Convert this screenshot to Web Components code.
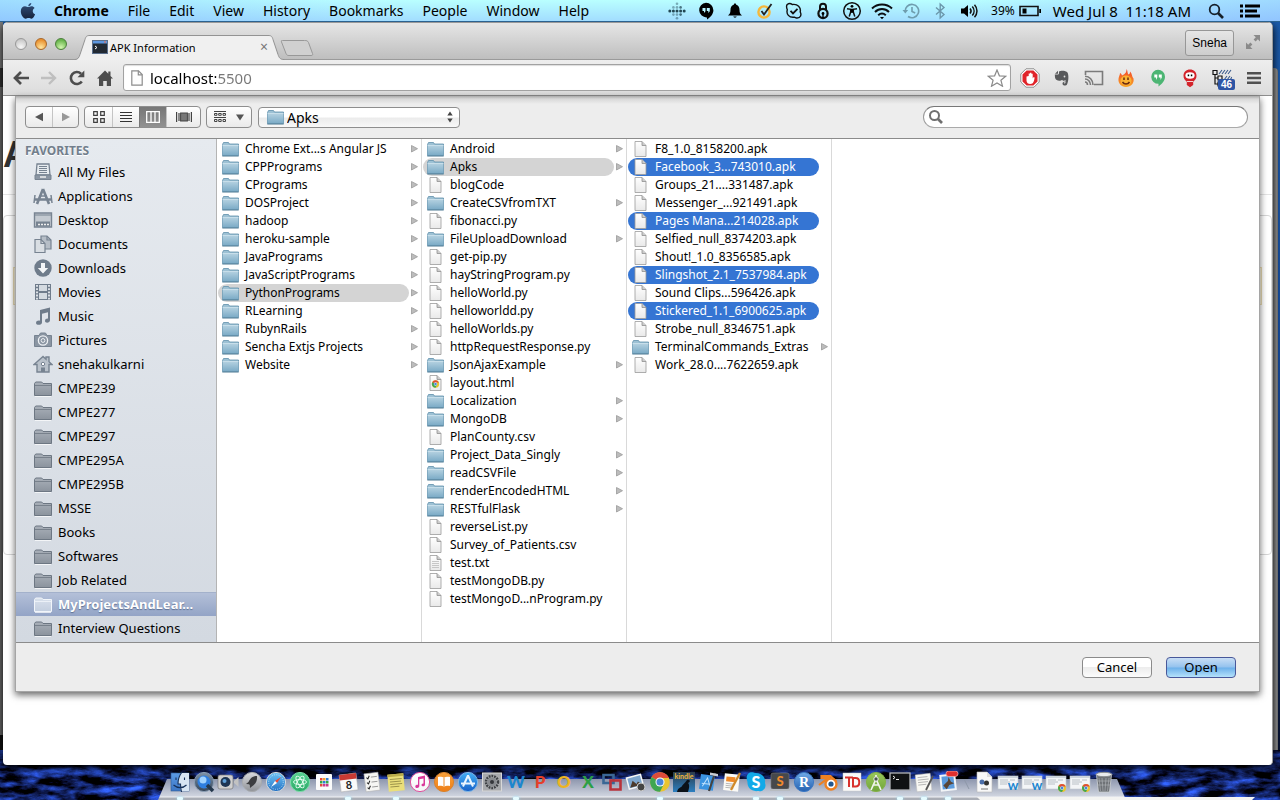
<!DOCTYPE html>
<html lang="en">
<head>
<meta charset="utf-8">
<title>APK Information</title>
<style>
  html, body { margin: 0; height: 100%; }
  body { font-family: "Noto Sans", "Open Sans", sans-serif; font-size: 13px; color: #000; background: #06102e; overflow: hidden; }
</style>
</head>
<body>
<mac-desktop>
  <menu-bar slot="menu"></menu-bar>
  <browser-window slot="window">
    <web-page slot="page"></web-page>
    <open-sheet slot="sheet"></open-sheet>
  </browser-window>
  <app-dock slot="dock"></app-dock>
</mac-desktop>

<script>
const define = (name, html, after) => {
  const t = document.createElement('template');
  t.innerHTML = html;
  customElements.define(name, class extends HTMLElement {
    constructor() {
      super();
      this.attachShadow({ mode: 'open' }).append(t.content.cloneNode(true));
    }
    connectedCallback() { if (after) after(this.shadowRoot, this); }
  });
};

/* ---------- icon library: [width, height, markup] ---------- */
const grad = (id, a, b) => `<linearGradient id="${id}" x1="0" y1="0" x2="0" y2="1"><stop offset="0" stop-color="${a}"/><stop offset="1" stop-color="${b}"/></linearGradient>`;
const page = extra => [17, 16, `${grad('p', '#fff', '#e9e9e9')}<path d="M3 .5h7l4 4v11H3z" fill="url(#p)" stroke="#9b9b9b" stroke-width=".8"/><path d="M10 .5v4h4" fill="#ccc" stroke="#909090" stroke-width=".8"/>${extra || ''}`];
const ball = (a, b, rim, inner) => [22, 22, `${grad('b', a, b)}<circle cx="11" cy="11" r="9.6" fill="url(#b)" stroke="${rim}"/>${inner}`];
const chromeBall = (x, y, r) => `<g transform="translate(${x} ${y}) scale(${r / 10})"><circle r="10" fill="#e9c42f"/><path d="M0 0L-8.7-5A10 10 0 0 1 8.7-5L9-4H0z" fill="#dd4b3a"/><path d="M0 0L-8.7-5A10 10 0 0 0 0 10L4 2z" fill="#3fa652"/><circle r="4.6" fill="#fff"/><circle r="3.6" fill="#4a86d8"/></g>`;
const letter = (ch, fill, o = {}) => `<text x="${o.x || 11}" y="${o.y || 17}" text-anchor="middle" font-family="${o.f || 'Lato, sans-serif'}" font-weight="${o.w || 900}" font-size="${o.s || 17}" fill="${fill}">${ch}</text>`;
const thumb = mark => [22, 22, `<rect x="1" y="5" width="20" height="13" fill="#f3f5f7" stroke="#c4cad0" stroke-width=".6"/><path d="M1 5h20v2H1z" fill="#cdd5dc"/><path d="M3 9h8M3 11h10M3 13h7M13 9h5" stroke="#aab2ba" stroke-width=".8"/>${mark}`];
const side = '#778391';
const sideFolder = (a, b, s) => [20, 18, `${grad('f', a, b)}<path d="M1.500 16.500v-12l1.200-1.500h6l1.300 1.500h8.500v12z" fill="url(#f)" stroke="${s}"/><path d="M2 6.500h16" stroke="${s}" stroke-width=".8"/><path d="M2 17.500h16" stroke="#fff" opacity=".7"/>`];
const dotGrid = () => {
  let s = '';
  for (let y = -2; y <= 2; y++) for (let x = -2; x <= 2; x++) {
    if (Math.abs(x) + Math.abs(y) > 3 || (Math.abs(x) + Math.abs(y) === 3)) continue;
    s += `<circle cx="${9 + x * 3.600}" cy="${9 + y * 3.600}" r="${y === 0 ? 1.500 : 1.300}" fill="#1b3d4a" opacity="${y === 0 ? .95 : x > 0 ? .7 : .4}"/>`;
  }
  return s;
};
const ICONS = {
  apple: [16, 18, `${grad('a', '#33527e', '#16233c')}<path fill="url(#a)" d="M11.300 1c.1 1.600-1.400 3.200-3 3.200-.2-1.600 1.400-3.100 3-3.200zM8.300 5c.8 0 1.700-.8 3.100-.8 1.300 0 2.500.6 3.200 1.700-2.700 1.700-2.300 5.200.5 6.400-.7 2-2.100 4.400-3.600 4.400-1.100 0-1.500-.7-2.900-.7s-1.800.7-2.900.7C3.400 16.700.8 12.800.8 9.300c0-3.400 2.100-5.100 4.200-5.100 1.400 0 2.500.8 3.300.8z"/>`],
  dots: [18, 18, dotGrid()],
  hangout: [16, 18, `<path d="M8 .8a7.400 7.400 0 0 1 7.400 7.400c0 4-3.400 7.300-6.400 9.200v-2A7.300 7.300 0 1 1 8 .8z"/><path d="M4.500 6h3v3.200L6 11V9H4.500zM8.800 6h3v3.200L10.300 11V9H8.800z" fill="#b6f4ff"/>`],
  bell: [16, 18, `<path d="M8 1.500c.8 0 1.200.5 1.200 1.200 2.500.6 3.300 2.800 3.300 5 0 3.500 1 4.500 2.500 5.800H1c1.500-1.300 2.500-2.300 2.500-5.800 0-2.200.8-4.400 3.300-5C6.800 2 7.200 1.500 8 1.500zM6.300 14.500h3.400c-.3 1.500-3.100 1.500-3.400 0z"/>`],
  norton: [16, 18, `<circle cx="7" cy="10" r="5.600" fill="none" stroke="#f5b73c" stroke-width="2.400"/><path d="M4.500 9l2.500 3.500L14.500 2" fill="none" stroke="#222" stroke-width="1.800"/>`],
  skypem: [18, 18, `<path d="M2.200 2.500c2-1.500 4-.8 5 0 5.500-1 9 3 8 7.500 1.500 2.500.5 6-3 6-1.200 0-1.700-.5-2.700-.8C4 16 1 12 2.300 7.800 1.500 6 1.200 4 2.200 2.500z" fill="none" stroke="#111" stroke-width="1.400"/><path d="M5.500 8.800l2.500 2.600 4.500-4.600" fill="none" stroke="#111" stroke-width="1.800"/>`],
  lock: [14, 18, `<path d="M4 8V4.700a3 3 0 0 1 6 0V8" fill="none" stroke="#111" stroke-width="2"/><circle cx="7" cy="11.500" r="4.600" fill="none" stroke="#111" stroke-width="2.200"/><circle cx="7" cy="11.500" r="1.400"/><path d="M6.300 11.500h1.400V16H6.300z"/>`],
  access: [20, 20, `<circle cx="10" cy="10" r="8.300" fill="none" stroke="#111" stroke-width="1.500"/><circle cx="10" cy="5.300" r="1.400"/><path d="M5 7.700l3.700.6v2.700l-1.500 4.500M15 7.700l-3.700.6v2.700l1.500 4.500" fill="none" stroke="#111" stroke-width="1.500"/><path d="M8.500 7.800h3v4h-3z"/>`],
  wifi: [22, 18, `<g fill="none" stroke="#0c0f12" stroke-width="2"><path d="M1 6.500c5.500-5.300 14.500-5.300 20 0M4 10c4-3.900 10-3.900 14 0M7.200 13.200c2.300-2 5.300-2 7.600 0"/></g><path d="M9 15h4l-2 2.300z"/>`],
  clock: [18, 18, `<g fill="none" stroke="#6f9dae" stroke-width="1.600"><path d="M3.300 10A6.700 6.700 0 1 1 6 14.500M10 5v4.500l3.200 1.500"/></g><path d="M.5 8h5.600L3.300 11.500z" fill="#6f9dae"/>`],
  bt: [12, 18, `<path d="M2 5.500l8 7L6.200 16V2L10 5.500l-8 7" fill="none" stroke="#6b97ab" stroke-width="1.400"/>`],
  volume: [18, 18, `<path d="M1 6.500h3L8 3v12l-4-3.500H1z"/><g fill="none" stroke="#111" stroke-width="1.500"><path d="M10 6.500c1.300 1.500 1.300 3.500 0 5M12.300 4.500c2.300 2.600 2.300 6.400 0 9M14.500 2.800c3.300 3.600 3.300 8.800 0 12.400"/></g>`],
  battery: [22, 14, `<path d="M1 2.500h18v9H1z" fill="none" stroke="#111" stroke-width="1.600"/><path d="M3.500 4.500h4v5h-4zM20.300 5H22v4h-1.700z"/>`],
  search: [16, 16, `<circle cx="6.500" cy="6.500" r="4.800" fill="none" stroke="#16202a" stroke-width="1.800"/><path d="M10 10l5 5" stroke="#16202a" stroke-width="2.600"/>`],
  list: [20, 14, `<path d="M0 .5h3v3H0zM5 .5h15v3H5zM0 5.500h3v3H0zM5 5.500h12v3H5zM0 10.500h3v3H0zM5 10.500h15v3H5z"/>`],
  term: [16, 14, `<rect x=".5" y=".5" width="15" height="13" fill="#222a33" stroke="#5a6f8c"/><path d="M1 1h14v2.500H1z" fill="#5d97e0"/><path d="M12 2h2" stroke="#f06a4a"/><path d="M3 6l2 1.500L3 9" stroke="#fff" fill="none"/>`],
  back: [16, 14, `<path d="M8 1L2 7l6 6M2.500 7H16" fill="none" stroke="#4d4d4d" stroke-width="2.700"/>`],
  fwd: [16, 14, `<path d="M8 1l6 6-6 6M13.500 7H0" fill="none" stroke="#bfbfbf" stroke-width="2.400"/>`],
  reload: [16, 16, `<path d="M12.800 11.500A6 6 0 1 1 12 3.700" fill="none" stroke="#4d4d4d" stroke-width="2.600"/><path d="M15.300.5v6.800H8.500z" fill="#4d4d4d"/>`],
  home: [16, 16, `<path d="M8 .5L0 8.500h2V16h4.200v-5h3.600v5H14V8.500h2l-2.500-2.600V1.500h-2.200v2.200z" fill="#4d4d4d"/>`],
  doc: [12, 16, `<path d="M.8.800h6.700l3.700 3.700v10.700H.8z" fill="#fdfdfd" stroke="#8c8c8c" stroke-width="1.200"/><path d="M7.300.800v4h3.900" fill="none" stroke="#8c8c8c" stroke-width="1.200"/>`],
  star: [20, 18, `<path d="M10 1l2.400 5.800 6.300.4-4.800 4 1.600 6-5.500-3.300L4.500 17.200l1.600-6-4.800-4 6.300-.4z" fill="#fff" stroke="#8a8a8a" stroke-width="1.200"/>`],
  abp: [20, 20, `<path d="M6 .8h8L19.200 6v8L14 19.200H6L.8 14V6z" fill="#fff" stroke="#8d8d8d"/><path d="M6.600 2.500h6.800l4.100 4.100v6.800l-4.100 4.100H6.600l-4.100-4.100V6.600z" fill="#e0242a"/><path d="M6.500 8.500v4c0 2.500 1.800 3.500 3.600 3.500 2.300 0 3.300-1.300 3.900-3.300l.7-3.200-1.500-.3-.5 1.300V5.700h-1.300V4.800H10v.7H8.700v2.500z" fill="#fff"/>`],
  evernote: [16, 18, `<path d="M5 2.500C7 1 12 1.500 13.500 3.500c1.500 3 1 9-.5 12-.8 1.500-4.500 1.500-4.500-1 0-1.500 1.500-2 3-1.700 0 .5-1.700.3-1.700 1.300 0 .7 1.700.8 1.700-.6V11c-1.500 1.500-3 .5-3.500-.2C6.500 12.500 1.500 12 1 8.500L.8 5.500H4c1 0 1-.7 1-3z" fill="#58595b"/><path d="M1 4.800l3-3v3z" fill="#58595b"/><circle cx="10.500" cy="7.500" r=".9" fill="#ddd"/>`],
  cast: [20, 16, `<g fill="none" stroke="#7b7b7b" stroke-width="1.600"><path d="M1.500 5V1.500h17v13H10M1 12c1.500 0 2.500 1.300 2.500 3M1 9c3 0 5.500 2.500 5.500 6M1 6.300c4.500 0 8 3.700 8 8.700"/></g>`],
  flame: [18, 20, `${grad('h', '#f2432a', '#f9a526')}<path d="M9.500 1c1.500 2 .5 4 2 5.500C13 6 13 4.500 13 3.500c2.500 2.500 1.500 4.500 3.500 7 1 4.500-2.500 8.500-7.500 8.500S1 15 1.500 11c.3-2.500 1.500-4 1.500-6 1.200.5 1.700 1.500 2 2.500C8.500 6 9.800 4 9.500 1z" fill="url(#h)"/><ellipse cx="9" cy="12.500" rx="5.500" ry="5" fill="#fbb232"/><path d="M7 9.500v2.500M11 9.500v2.500M5.500 14c1.500 2.500 5.500 2.500 7 0" stroke="#6b2a10" stroke-width="1.500" fill="none"/>`],
  quote: [16, 18, `<path d="M8 .8a7 7 0 0 1 7 7c0 4-3.200 7.600-6.500 9.700v-2.700A7 7 0 1 1 8 .8z" fill="#4cb573"/><path d="M4.300 5.500h3v3L6 11V8.500H4.300zM8.800 5.500h3v3L10.500 11V8.500H8.800z" fill="#fff"/>`],
  redguy: [16, 20, `<path d="M8 1.500c3.800 0 6.500 2.500 6.500 6.200 0 3-1.500 4.500-3.300 6V17L8 19.300 4.800 17v-3.300c-1.800-1.500-3.300-3-3.300-6C1.500 4 4.200 1.500 8 1.500z" fill="#d3232b"/><ellipse cx="8" cy="7.500" rx="4.600" ry="3.200" fill="#fff"/><path d="M5.700 6.500h1.500v1.800H5.700zM8.800 6.500h1.500v1.800H8.800z"/><path d="M5 13.500h6" stroke="#fff" stroke-width=".8"/>`],
  menu3: [14, 14, `<path d="M0 1h14v2.500H0zM0 5.800h14v2.500H0zM0 10.600h14v2.500H0z" fill="#505050"/>`],
  tree: [20, 18, `<g fill="none" stroke="#111" stroke-width="1.200"><path d="M1 1.500h4v4H1zM6 7h4v4H6zM6 13h4v4H6zM3 5.500V15h3M3 9h3"/></g><path d="M7 5l3-4M10 5l3-4M13 5l3-4M16 5l3-4M12 11l3-4M15 11l3-4M18 11l2-3" stroke="#3b5b8c" stroke-width="1.100"/>`],
  expand: [14, 14, `<path d="M7.500 0H14v6.500l-2.200-2.200-2.200 2.200-2-2 2.200-2.200zM6.500 14H0V7.500l2.200 2.200 2.200-2.200 2 2-2.200 2.200z" fill="#8a8a8a"/>`],
  tl: [8, 10, `<path d="M8 .8v8.400L0 5z" fill="#565656"/>`],
  tr: [8, 10, `<path d="M0 .8v8.400L8 5z" fill="#989898"/>`],
  vgrid: [12, 12, `<path d="M.7.700h3.600v3.600H.7zM7.700.700h3.600v3.600H7.700zM.7 7.700h3.600v3.600H.7zM7.700 7.700h3.600v3.600H7.700z" fill="none" stroke="#3f3f3f" stroke-width="1.200"/>`],
  vlist: [12, 12, `<path d="M0 .5h12M0 3.500h12M0 6.500h12M0 9.500h12" stroke="#333" stroke-width="1.200" transform="translate(0 1)"/>`],
  vcols: [14, 12, `<path d="M.7.700h12.600v10.600H.7zM5 .7v10.600M9 .7v10.600" fill="none" stroke="#fff" stroke-width="1.300"/>`],
  vflow: [16, 12, `<path d="M.6 1v10M3 2v8M13 2v8M15.400 1v10" stroke="#444" stroke-width="1.200"/><rect x="4.600" y="2" width="6.800" height="8" fill="#777" stroke="#444"/>`],
  arrange: [12, 12, `<g fill="none" stroke="#444"><path d="M.5 2.500h2.500v1.800H.5zM4.700 2.500h2.500v1.800H4.700zM9 2.500h2.500v1.800H9zM.5 8.500h2.500v2H.5zM4.700 8.500h2.500v2H4.700zM9 8.500h2.500v2H9zM0 .5h12M0 6.500h12"/></g>`],
  down: [8, 7, `<path d="M0 .5h8L4 6.500z" fill="#555"/>`],
  updown: [6, 12, `<path d="M3 .5l2.700 4H.3zM3 11.500l2.700-4H.3z" fill="#444"/>`],
  lens: [16, 16, `<circle cx="6.500" cy="6.500" r="4.500" fill="none" stroke="#6f6f6f" stroke-width="2"/><path d="M10 10l4 4" stroke="#6f6f6f" stroke-width="2.600"/>`],
  folder: [17, 16, `${grad('f', '#b4d1e0', '#7aaac6')}<path d="M.5 14.500V3.500L1.500 1.500h5l1 1.500h9v11.500z" fill="#9dc1d4" stroke="#5f8fab" stroke-width=".8"/><path d="M.7 4.500h15.600v10H.7z" fill="url(#f)"/><path d="M.5 4.500h16" stroke="#cfe3ee" stroke-width=".8"/><path d="M.3 15h16.400" stroke="#4e7b94"/>`],
  file: page(), text: page('<path d="M5 6.500h7M5 8.500h7M5 10.500h7M5 12.500h7" stroke="#bbb" stroke-width=".8"/>'),
  html: page(chromeBall(8.500, 9, 3.700)),
  arrow: [7, 8, `<path d="M.5.500v6.500L6.500 3.700z" fill="#bcbcbc" stroke="#9a9a9a" stroke-width=".8"/>`],
  sfolder: sideFolder('#a9b0b9', '#8b939d', '#6d7783'), sfolderOn: sideFolder('#d9e1ec', '#c3cedf', '#f1f5fa'),
  sall: [20, 18, `<path d="M4 1h12l1 11H3z" fill="#e6ebef" stroke="${side}" stroke-width="1.300"/><path d="M6 3.500h8M6 5.500h8M6 7.500h8M6 9.500h8" stroke="${side}"/><path d="M2 12h16v4.500H2z" fill="#8b96a3" stroke="${side}"/><path d="M7 14h6" stroke="#eee" stroke-width="1.500"/>`],
  sapps: [20, 18, `<path d="M1 12.500h18M10 2L4 17M10 2l6 15" stroke="${side}" stroke-width="2.600" fill="none"/><path d="M2 8l-1 8M18 8l1 8M6 9h8" stroke="${side}" stroke-width="1.500"/>`],
  sdesk: [20, 18, `<path d="M1.500 2h17v14h-17z" fill="#c4cad1" stroke="${side}" stroke-width="1.400"/><path d="M2 4h16" stroke="${side}"/><path d="M3 10.500h14v5H3z" fill="${side}"/><path d="M5 13.500h2M8 13.500h2M11 13.500h2M14 13.500h2" stroke="#eee" stroke-width="1.500"/>`],
  sdocs: [20, 18, `<path d="M8 1h6l4 4v9H8z" fill="#b6bec7" stroke="${side}" stroke-width="1.200"/><path d="M2 4.500h6l4 4v9H2z" fill="#d9dee3" stroke="${side}" stroke-width="1.200"/><path d="M8 4.500v4h4M14 1v4h4" fill="none" stroke="${side}" stroke-width="1.200"/>`],
  sdown: [20, 18, `<circle cx="10" cy="9" r="8.700" fill="#6f7c8b"/><path d="M8 4h4v5h3.200L10 14.500 4.800 9H8z" fill="#f3f5f7"/>`],
  smov: [20, 18, `<path d="M2 1h16v16H2z" fill="#6f7c8b"/><path d="M6 2h8v6H6zM6 10h8v6H6z" fill="#d4dae0"/><path d="M4 2v15M16 2v15" stroke="#e8ecf0" stroke-width="1.800" stroke-dasharray="1.800 1.400"/>`],
  smus: [20, 18, `<path d="M7 3l10-2.500v12.700c0 3-5 3.300-5 .8 0-2 2-2.700 3-2.300V5.300L9 6.800v8.700c0 3-6 3-6 .4 0-2 2.500-2.800 4-2.200z" fill="#6f7c8b"/>`],
  spic: [20, 18, `<path d="M1.500 4.500H6l1.500-2.500h5L14 4.500h4.500v11h-17z" fill="#8a95a2" stroke="${side}"/><circle cx="10" cy="9.500" r="4.600" fill="#8a95a2" stroke="#eef1f4" stroke-width="1.300"/><circle cx="10" cy="9.500" r="1.900" fill="none" stroke="#eef1f4"/>`],
  shome: [20, 18, `<path d="M10 1.500L1 9.500h3V17h12V9.500h3l-3-2.700V2h-3v2.200z" fill="#b9c1ca" stroke="${side}" stroke-width="1.400"/><circle cx="10" cy="9" r="1.700" fill="#fff" stroke="${side}"/><path d="M8 17v-4.500h4V17z" fill="${side}"/>`],

  finder: [22, 22, `${grad('g', '#5b9be6', '#3c76c4')}<rect x="2" y="2" width="18" height="18" fill="url(#g)" stroke="#2f5c95" stroke-width=".6"/><path d="M12 2h8v18h-8c-.7-2-.8-5-.7-7H9c0-4 1-8 3-11z" fill="#d6e4f2"/><path d="M13 1c-3 4-4 8-4 12h2.500c0 3 .3 5 1 8M7 6.500v2.500M15.500 6.500v2.500M4.500 14c4 3.500 9.500 3.500 13 0" fill="none" stroke="#16315a" stroke-width="1.100"/>`],
  qt: ball('#7f93a8', '#34455a', '#8a9db3', `<circle cx="11" cy="11" r="6.500" fill="#2f7fe0"/><circle cx="10" cy="9" r="3.500" fill="#9fd2ff"/><path d="M14 14l6 6" stroke="#25384d" stroke-width="3.500"/>`),
  facetime: [22, 22, `<rect x="1" y="4" width="15" height="14" rx="2" fill="#cfcfcf" stroke="#777" stroke-width=".7"/><path d="M17 10l4.500-4v10L17 12z" fill="#c2c2c2"/><circle cx="8.500" cy="11" r="5" fill="#1d3553"/><circle cx="7.500" cy="10" r="2" fill="#5fa0d8"/>`],
  launch: ball('#d9dade', '#8f9297', '#a6a9ad', `<path d="M16 5c-5 0-7 3-8.500 6L5 13l3 .3.8.8.2 3L11.500 15c3-2 5-5 4.500-10z" fill="#3c3d40"/>`),
  safari: ball('#6fc4f5', '#2371c4', '#d4d8dc', `<circle cx="11" cy="11" r="7.300" fill="none" stroke="#cfe8fa" stroke-width=".8" stroke-dasharray="1 1.300"/><path d="M16 6l-4 6-2-2z" fill="#f04a32"/><path d="M6 16l4-6 2 2z" fill="#fff"/>`),
  atom: ball('#58d391', '#2aa866', '#7bdca8', `<g fill="none" stroke="#eafff4" stroke-width=".9"><ellipse cx="11" cy="11" rx="6.500" ry="2.500"/><ellipse cx="11" cy="11" rx="6.500" ry="2.500" transform="rotate(60 11 11)"/><ellipse cx="11" cy="11" rx="6.500" ry="2.500" transform="rotate(120 11 11)"/></g>`),
  grid: [22, 22, `<rect x="3" y="3" width="16" height="16" rx="1" fill="#fbfbfb"/><path d="M7 7h2.500v2.500H7zM7 13h2.500v2.500H7z" fill="#e4483c"/><path d="M10 7h2.500v2.500H10z" fill="#f3a02c"/><path d="M13 7h2.500v2.500H13zM10 10h2.500v2.500H10z" fill="#2f7fd6"/><path d="M7 10h2.500v2.500H7zM13 10h2.500v2.500H13z" fill="#37a548"/><path d="M10 13h2.500v2.500H10zM13 13h2.500v2.500H13z" fill="#c73b8c"/>`],
  cal: [22, 22, `<g transform="rotate(-7 11 11)"><rect x="3" y="3" width="17" height="17" fill="#fafafa" stroke="#aaa" stroke-width=".5"/><path d="M3 3h17v5.500H3z" fill="#c83a34"/>${letter('8', '#222', { y: 18, s: 11, w: 700, x: 11.5 })}</g>`],
  remind: [22, 22, `<g transform="rotate(-7 11 11)"><rect x="4" y="2" width="14" height="18" fill="#f6f6f4" stroke="#b5b5b5" stroke-width=".6"/><path d="M6 6l1.300 1.500L9 4.500M6 11l1.300 1.500L9 9.500M6 16l1.300 1.500L9 14.500" stroke="#222" fill="none"/><path d="M10.500 6h6M10.500 11h6M10.500 16h6" stroke="#888" stroke-width=".8"/></g>`],
  sticky: [22, 22, `<g transform="rotate(-5 11 11)"><rect x="3" y="3" width="16" height="17" fill="#eadf7a"/><path d="M3 3h16v2.500H3z" fill="#b9ab4b"/><path d="M5 8h12M5 10.500h11M5 13h12M5 15.500h9" stroke="#8b8340" stroke-width=".8"/></g>`],
  itunes: ball('#fff', '#f4f4f7', '#e04f9c', `<path d="M9 6l7-1.500v9c0 2.500-3.500 2.300-3.500.5 0-1 1-1.500 2-1.500V7.500L10.300 8.300v6.700c0 2.500-4 2.500-4 .4 0-1.200 1.500-1.700 2.700-1.500z" fill="#d9379a"/>`),
  ibooks: ball('#f9a23a', '#ee7d16', '#d8832f', `<path d="M11 7c-1.500-1.300-4-1.300-6-1v9c2-.3 4.500-.3 6 1 1.500-1.300 4-1.300 6-1V6c-2-.3-4.500-.3-6 1z" fill="#fff"/><path d="M11 7v9" stroke="#ee8d2b"/>`),
  appstore: ball('#43aef5', '#1760c8', '#7fb6e6', `<path d="M11 4.500L6 15.500M11 4.500l5 11M4 12.500h14" stroke="#e8f4ff" stroke-width="2" fill="none"/>`),
  prefs: [22, 22, `<rect x="1.500" y="2" width="19" height="18" fill="#a8aaad" stroke="#d8d8d8"/><circle cx="11" cy="11" r="6" fill="none" stroke="#3f4246" stroke-width="2.500" stroke-dasharray="1.800 .9"/><circle cx="11" cy="11" r="4.600" fill="#898c90"/><circle cx="11" cy="11" r="2" fill="#35373b"/>`],
  word: [22, 22, letter('W', '#1b86cf')], ppt: [22, 22, letter('P', '#e4402a')],
  outlook: [22, 22, letter('O', '#eeb41f')], excel: [22, 22, letter('X', '#2c9f45')],
  vm: [22, 22, `<path d="M2.500 4h10v8h-10z" fill="none" stroke="#3a6795" stroke-width="2.600"/><path d="M9.500 9.500h10v9h-10z" fill="none" stroke="#b8323b" stroke-width="2.600"/>`],
  photo: [22, 22, `<g transform="rotate(-15 11 11)"><rect x="2" y="4" width="16" height="13" fill="#f7f7f7"/><path d="M3.500 5.500h13v10h-13z" fill="#7fa7cf"/><path d="M4 15l4-6 3 4 2-2 3 4z" fill="#4c3a2c"/></g><circle cx="16" cy="16" r="4" fill="#444" stroke="#ccc"/>`],
  chrome: [22, 22, chromeBall(11, 11, 9.800)],
  kindle: [22, 22, `${grad('k', '#2c3b49', '#2d7fc0')}<rect x="0" y="1" width="22" height="20" fill="url(#k)"/>${letter('kindle', '#f3b63a', { s: 7, y: 8, w: 700 })}<path d="M4 21c1-5 4-4 5-6s3-3 5-6c3-1 4 2 1 3 2 2 1 6 0 9z" fill="#0b1118"/>`],
  xcode: [22, 22, `<g transform="rotate(8 11 11)"><path d="M3 4h14v15H3z" fill="#3b93e0"/><path d="M6 16l4-9 4 9M5 13h10" stroke="#bfe0fb" fill="none"/></g><path d="M18 2L12 20" stroke="#444" stroke-width="2.200"/><path d="M13 1.500l8 1.500v2.500l-8-1.500z" fill="#c7cbd0"/>`],
  pages: [22, 22, `<g transform="rotate(6 11 11)"><rect x="3" y="3" width="15" height="17" fill="#fbfaf6"/><path d="M5 6h9v5H5z" fill="#f08a2a"/><path d="M5 13h9M5 15h7M5 17h8" stroke="#aaa" stroke-width=".8"/></g><path d="M19 2L10 19" stroke="#d08a2a" stroke-width="2.300"/>`],
  skype: [22, 22, `<path d="M3 3c3-3 6-1 7-1 6-.5 11 4 10 10 2 5-2 9-7 8C6 21 2 16 2.500 11 1.500 8 1 5 3 3z" fill="#12a9e8"/>${letter('S', '#fff', { s: 16, y: 17 })}`],
  sublime: [22, 22, `<rect x="2" y="2" width="18" height="16" rx="2" fill="#46484b" stroke="#777" stroke-width=".6"/>${letter('S', '#f08a2b', { s: 13, y: 15 })}<path d="M1 18h20v2H1z" fill="#b7bbc0"/>`],
  r: ball('#6fa9e6', '#2460b0', '#3c79c5', letter('R', '#fff', { s: 14, y: 16, w: 700, f: 'Liberation Serif, serif' })),
  blender: [22, 22, `<path d="M2 14L11 7H4.500V5h9l6 6" fill="none" stroke="#ee8122" stroke-width="2.200"/><circle cx="14" cy="13" r="5.500" fill="#fff" stroke="#ee8122" stroke-width="2.400"/><circle cx="14" cy="13" r="2.600" fill="#23588f"/>`],
  td: [22, 22, `<rect x="2" y="2" width="18" height="18" fill="#fafafa" stroke="#ccc" stroke-width=".5"/><path d="M4 6.500h8M8 6.500V16M12 7h2.500c5 0 5 8.500 0 8.500H12z" fill="none" stroke="#d8322d" stroke-width="2"/>`],
  android: ball('#9ac85a', '#6fa53a', '#86b04b', `<path d="M11 4v4M11 8L6 19M11 8l5 11M7.500 14h7" stroke="#f1f5ee" stroke-width="1.700" fill="none"/><circle cx="11" cy="8" r="2.200" fill="#4a5a4a" stroke="#eee"/>`),
  terminal: [22, 22, `<rect x="1" y="2" width="20" height="17" fill="#0f1113" stroke="#b3b6ba" stroke-width="1.300"/><path d="M4 5l2 1.500L4 8M7 8.500h3" stroke="#eee" fill="none"/>`],
  textedit: [22, 22, `<g transform="rotate(-6 11 11)"><rect x="3" y="3" width="15" height="17" fill="#f8f8f4" stroke="#bbb" stroke-width=".5"/><path d="M5 6h10M5 8.500h11M5 11h10M5 13.500h8" stroke="#a9a9a9" stroke-width=".8"/></g><path d="M20 5l-7 14" stroke="#555" stroke-width="1.800"/>`],
  mail: [22, 22, `<g transform="rotate(-6 11 11)"><rect x="3" y="3" width="16" height="17" fill="#f1f4f7"/><path d="M5 5h12v13H5z" fill="#5b9bdd"/><path d="M6 14l5-4 1-4 2 5 3 2-5 1-3 4z" fill="#5a4636"/></g><rect x="9" y="0" width="12" height="5.500" rx="2.700" fill="#e0302f" stroke="#f7b5b0" stroke-width=".7"/>`],
  sep: [12, 22, `<path d="M4 8l5 10" stroke="#8e98a8"/>`],
  dockdoc: [22, 22, `<path d="M4 1h10l5 5v15H4z" fill="#f8f8f8" stroke="#bbb" stroke-width=".6"/><path d="M14 1v5h5" fill="#ddd"/><circle cx="9" cy="11" r="2.500" fill="#4c6faa"/><circle cx="13.500" cy="12" r="2.500" fill="#333"/><path d="M8 18h7" stroke="#777"/>`],
  thumbw: thumb(letter('W', '#1b86cf', { x: 16, y: 19, s: 10 })), thumbc: thumb(chromeBall(17, 17, 4)),
  trash: [22, 22, `<path d="M3.500 4h15L16.500 21h-11z" fill="#6e7276" stroke="#cfd3d6" stroke-width=".8"/><path d="M6 7l1.500 13M9 7l1 13M13 7l-1 13M16 7l-1.500 13M5 10h12M5 14h12" stroke="#b5b9bd" stroke-width=".6"/><ellipse cx="11" cy="3.500" rx="8" ry="2.200" fill="#e9ebec" stroke="#8a8d90"/>`]
};

customElements.define('ui-icon', class extends HTMLElement {
  constructor() { super(); this.attachShadow({ mode: 'open' }); }
  connectedCallback() {
    const [w, h, body] = ICONS[this.getAttribute('name')] || [0, 0, ''];
    this.shadowRoot.innerHTML = `<style>:host{display:block;flex:none;width:${w}px;height:${h}px}svg{display:block}</style><svg width="${w}" height="${h}" viewBox="0 0 ${w} ${h}" aria-hidden="true">${body}</svg>`;
  }
});

/* ---------- desktop ---------- */
define('mac-desktop', `
<style>
  :host { display: grid; grid-template-rows: auto 1fr 35px; min-height: 100vh; position: relative; overflow: hidden; background: linear-gradient(#1c5cab, #14489a 50%, #050d28 96%); }
  .water { position: absolute; left: 0; bottom: 0; width: 100%; height: 50px; }
  .stage { display: grid; grid-template: 1fr / 1fr; }
  .stage > * { grid-area: 1 / 1; }
  .left { justify-self: start; width: 3px; background: linear-gradient(#7d7d7d 46px, #333 46px 65px, #6e6e6e 65px 713px, #121212 713px); }
  .right { justify-self: end; width: 10px; margin: 46px 2px 8px 0; background: linear-gradient(90deg, #777, #9a9a9a 90%, #666); border-radius: 0 4px 0 0; }
  slot[name=window] { display: grid; margin: 0 7px 0 3px; z-index: 1; }
</style>
<svg class="water" aria-hidden="true"><filter id="w" x="0" y="0" width="100%" height="100%" color-interpolation-filters="sRGB"><feTurbulence type="fractalNoise" baseFrequency=".04 .11" numOctaves="5" seed="5"/><feColorMatrix values=".45 0 0 0 -.16  .9 0 0 0 -.33  2.200 0 0 0 -.75  0 0 0 0 1"/></filter><rect width="100%" height="100%" filter="url(#w)"/></svg>
<slot name="menu"></slot>
<div class="stage"><div class="left"></div><div class="right"></div><slot name="window"></slot></div>
<slot name="dock"></slot>`);

define('menu-bar', `
<style>
  :host { display: flex; align-items: center; height: 21px; padding: 0 20px; border-bottom: 1px solid #2b6290; position: relative; z-index: 3;
    background: linear-gradient(90deg, rgba(120,170,255,.4), transparent 30% 75%, rgba(120,160,255,.4)), linear-gradient(#b9ffff, #a2ddff); font-size: 14px; }
  button { all: unset; white-space: nowrap; cursor: default; }
  nav { display: flex; gap: 19px; margin-left: 18px; flex: 1; }
  nav button:first-child { font-weight: 700; }
  .extras { display: flex; width: 322px; }
  .extras button { flex: 1; display: grid; justify-content: center; align-items: center; }
  .pct { font-size: 12px; margin: 0 4px 0 7px; }
  time { font-size: 15px; margin: 0 17px 0 12px; white-space: pre; }
  .find { margin-right: 16px; }
</style>
<button aria-label="Apple"><ui-icon name="apple"></ui-icon></button>
<nav><button>Chrome</button><button>File</button><button>Edit</button><button>View</button><button>History</button><button>Bookmarks</button><button>People</button><button>Window</button><button>Help</button></nav>
<div class="extras"></div>
<span class="pct">39%</span><ui-icon name="battery"></ui-icon>
<time>Wed Jul 8  11:18 AM</time>
<button class="find" aria-label="Search"><ui-icon name="search"></ui-icon></button>
<button aria-label="Notifications"><ui-icon name="list"></ui-icon></button>`,
r => r.querySelector('.extras').innerHTML = ['dots', 'hangout', 'bell', 'norton', 'skypem', 'lock', 'access', 'wifi', 'clock', 'bt', 'volume'].map(n => `<button aria-label="${n}"><ui-icon name="${n}"></ui-icon></button>`).join(''));

/* ---------- browser ---------- */
define('browser-window', `
<style>
  :host { display: flex; flex-direction: column; background: #fff; border-radius: 5px 5px 4px 4px; overflow: hidden; box-shadow: 0 3px 8px #000; border-right: 1px solid #999; }
  button { all: unset; }
  .strip { display: flex; align-items: center; height: 38px; background: linear-gradient(#e6e6e6, #bdbdbd); border-top: 1px solid #999; box-sizing: border-box; box-shadow: inset 0 -1px #9a9a9a; padding: 0 12px; }
  .lights { display: flex; gap: 8px; margin-top: 4px; }
  .lights button { width: 10px; height: 10px; border: 1px solid #999; border-radius: 50%; background: radial-gradient(circle at 50% 80%, #f7f7f7, #bbb); }
  .lights .y { border-color: #a8672a; background: radial-gradient(circle at 50% 85%, #ffe7a0, #ea9230 75%); }
  .lights .g { border-color: #4c7f3c; background: radial-gradient(circle at 50% 85%, #d3f7b0, #68b54c 75%); }
  .tab { display: grid; width: 210px; height: 26px; align-self: end; margin-left: 8px; }
  .tab > * { grid-area: 1 / 1; }
  .label { display: flex; align-items: center; padding: 0 17px 0 17px; font-size: 11px; }
  .label span { flex: 1; padding-left: 2px; }
  .label button { color: #777; font-size: 14px; line-height: 14px; }
  .new { align-self: end; margin: 0 auto 3px -5px; }
  .user { font: 12px "Liberation Sans", sans-serif; border: 1px solid #979797; border-radius: 3px; padding: 0 6px; height: 24px; line-height: 25px; margin: 3px 12px 0 0; background: linear-gradient(#e6e6e6, #cdcdcd); }
  .bar { display: flex; align-items: center; height: 36px; box-sizing: border-box; padding: 0 8px 0 10px; background: linear-gradient(#eee, #dcdcdc); border-bottom: 1px solid #8e8e8e; }
  .nav { display: flex; gap: 12px; }
  .nav, .ext { align-items: center; }
  .omni { flex: 1; display: flex; align-items: center; height: 25px; margin: 0 9px 0 10px; padding: 0 3px 0 7px; border: 1px solid #a2a2a2; border-radius: 3px; background: #fff; box-shadow: inset 0 1px 1px #ddd; }
  input { all: unset; flex: 1; font-size: 15px; line-height: 24px; margin-left: 7px; color: transparent; background: linear-gradient(90deg, #000 66px, #777 66px) text; -webkit-background-clip: text; }
  .ext { display: flex; gap: 12px; }
  .ext button { width: 20px; display: grid; justify-content: center; position: relative; }
  .ext b { position: absolute; left: 6px; top: 10px; font: 700 10px/11px "Liberation Sans", sans-serif; color: #fff; background: #2d55a5; border-radius: 2px; padding: 0 3px; }
  .body { flex: 1; display: grid; grid-template: auto 1fr / 1fr; }
  slot[name=page] { display: block; grid-area: 1 / 1 / 3 / 2; }
  slot[name=sheet] { display: block; grid-area: 1 / 1; z-index: 1; }
</style>
<div class="strip">
  <div class="lights"><button aria-label="Close"></button><button class="y" aria-label="Minimize"></button><button class="g" aria-label="Zoom"></button></div>
  <div class="tab">
    <svg width="210" height="26" aria-hidden="true"><path d="M0 25.500c3 0 4-2 5-5l5-15c1-3.500 2-4 5-4h178c3 0 4 .5 5 4l5 15c1 3 2 5 6 5V27H0z" fill="#f0f0f0" stroke="#939393"/></svg>
    <div class="label"><ui-icon name="term"></ui-icon><span>APK Information</span><button aria-label="Close tab">×</button></div>
  </div>
  <button class="new" aria-label="New tab"><svg width="34" height="18" style="display:block" aria-hidden="true"><path d="M1.500 3c-.5-1.500 0-1.500 1-1.500h22c2 0 3 0 4 2l4 11c.5 1.500 0 2-1.500 2H9c-1.500 0-2.500-.5-3-2z" fill="#d0d0d0" stroke="#989898"/></svg></button>
  <button class="user">Sneha</button><ui-icon name="expand"></ui-icon>
</div>
<div class="bar">
  <div class="nav"><button aria-label="Back"><ui-icon name="back"></ui-icon></button><button aria-label="Forward"><ui-icon name="fwd"></ui-icon></button><button aria-label="Reload"><ui-icon name="reload"></ui-icon></button><button aria-label="Home"><ui-icon name="home"></ui-icon></button></div>
  <div class="omni"><ui-icon name="doc"></ui-icon><input aria-label="Address" value="localhost:5500"><ui-icon name="star"></ui-icon></div>
  <div class="ext"></div>
</div>
<div class="body"><slot name="page"></slot><slot name="sheet"></slot></div>`,
r => r.querySelector('.ext').innerHTML = ['abp', 'evernote', 'cast', 'flame', 'quote', 'redguy', 'tree', 'menu3'].map(n => `<button aria-label="${n}"><ui-icon name="${n}"></ui-icon>${n === 'tree' ? '<b>46</b>' : ''}</button>`).join(''));

define('web-page', `
<style>
  :host { display: block; overflow: hidden; }
  h1 { margin: 39px 0 0; font: 700 36px/40px "Liberation Sans", sans-serif; color: #333; height: 59px; border-bottom: 1px solid #e4e4e4; }
  .panel { margin-top: 20px; border: 1px solid #d6d6d6; border-radius: 4px; height: 340px; box-sizing: border-box; padding: 51px 9px; }
  .note { height: 36px; border: 1px solid #ecdfb8; background: #fbf6e0; }
</style>
<h1>A</h1><div class="panel"><div class="note"></div></div>`);

/* ---------- open-file sheet ---------- */
define('open-sheet', `
<style>
  :host { display: block; margin: 0 12px; border: 1px solid #a5a5a5; border-top: 0; background: #ededed; box-shadow: 0 3px 7px rgba(0,0,0,.6); }
  .tools { display: flex; align-items: center; height: 42px; border-bottom: 1px solid #8b8b8b; padding: 0 11px 0 9px; background: linear-gradient(#aaa, #d8d8d8 3px, #ededed 8px); }
  button { all: unset; }
  .group { display: flex; box-sizing: border-box; height: 22px; border: 1px solid #8e8e8e; border-radius: 4px; background: linear-gradient(#fff, #eaeaea); margin-right: 5px; overflow: hidden; }
  .group button { box-sizing: border-box; width: 27px; display: flex; justify-content: center; align-items: center; gap: 10px; border-left: 1px solid #c4c4c4; }
  .group button:first-child { border-left: 0; }
  .group .nav { width: 26px; }
  .group .wide { width: 34px; }
  .group .menu { width: 44px; }
  .group .on { background: linear-gradient(#777, #919191); border-color: #777; }
  .where { display: grid; align-items: center; width: 202px; height: 21px; box-sizing: border-box; margin-left: 1px; border: 1px solid #8e8e8e; border-radius: 4px; background: linear-gradient(#fff 45%, #ececec 55%, #f8f8f8); }
  .where > * { grid-area: 1 / 1; }
  .where ui-icon { margin-left: 8px; }
  .where ui-icon:last-child { justify-self: end; margin-right: 6px; }
  select { all: unset; padding-left: 28px; font-size: 14px; line-height: 19px; }
  .search { margin-left: auto; display: flex; align-items: center; width: 325px; height: 22px; box-sizing: border-box; border: 1px solid #8a8a8a; border-color: #777 #999 #aaa; border-radius: 11px; background: #fff; padding: 0 4px; }
  .search input { all: unset; flex: 1; height: 18px; }
  .cols { display: grid; grid-template-columns: 201px 205px 205px 205px 1fr; background: #fff; border-bottom: 1px solid #8b8b8b; }
  footer { display: flex; justify-content: flex-end; gap: 14px; padding: 14px 23px 13px; }
  footer button { width: 68px; height: 19px; border: 1px solid #8b8b8b; border-radius: 4px; text-align: center; font-size: 13px; line-height: 19px; background: linear-gradient(#fff 45%, #ededed 50%, #fcfcfc); }
  footer .go { border-color: #48589a; background: linear-gradient(#c9def5, #94c2ee 48%, #6db0ea 52%, #b5e2fb); }
</style>
<div class="tools">
  <div class="group"><button class="nav" aria-label="Back"><ui-icon name="tl"></ui-icon></button><button class="nav" aria-label="Forward"><ui-icon name="tr"></ui-icon></button></div>
  <div class="group"><button aria-label="Icons"><ui-icon name="vgrid"></ui-icon></button><button aria-label="List"><ui-icon name="vlist"></ui-icon></button><button class="on" aria-label="Columns"><ui-icon name="vcols"></ui-icon></button><button class="wide" aria-label="Cover Flow"><ui-icon name="vflow"></ui-icon></button></div>
  <div class="group"><button class="menu" aria-label="Arrange"><ui-icon name="arrange"></ui-icon><ui-icon name="down"></ui-icon></button></div>
  <div class="where"><ui-icon name="folder"></ui-icon><select aria-label="Folder"><option>Apks</option></select><ui-icon name="updown"></ui-icon></div>
  <label class="search"><ui-icon name="lens"></ui-icon><input type="search" aria-label="Search files"></label>
</div>
<div class="cols">
  <favorites-list></favorites-list>
  <file-column data-set="0"></file-column><file-column data-set="1"></file-column><file-column data-set="2"></file-column>
</div>
<footer><button>Cancel</button><button class="go">Open</button></footer>`);

define('side-item', `
<style>
  :host { display: block; }
  a { display: flex; align-items: center; gap: 5px; height: 24px; padding-left: 17px; color: #000; text-decoration: none; font-size: 13px; white-space: nowrap; }
  :host([current]) a { color: #fff; font-weight: 700; background: linear-gradient(#b5c1d9, #93a4c6); box-shadow: inset 0 1px #a3b1cb; text-shadow: 0 1px 1px #5f7194; }
</style>
<a href="#"><span><slot></slot></span></a>`,
(r, el) => { const i = document.createElement('ui-icon'); i.setAttribute('name', el.getAttribute('icon')); r.querySelector('a').prepend(i); });

define('favorites-list', `
<style>
  :host { display: block; box-sizing: border-box; border-right: 1px solid #b4b4b4; background: linear-gradient(#e6eaef, #d3d9e1); padding-bottom: 2px; }
  h2 { margin: 0; padding: 3px 0 0 9px; font-size: 12px; line-height: 18px; color: #727e8c; text-shadow: 0 1px #fff; }
</style>
<h2>FAVORITES</h2><nav aria-label="Favorites"></nav>`,
r => {
  const top = [['sall', 'All My Files'], ['sapps', 'Applications'], ['sdesk', 'Desktop'], ['sdocs', 'Documents'], ['sdown', 'Downloads'], ['smov', 'Movies'], ['smus', 'Music'], ['spic', 'Pictures'], ['shome', 'snehakulkarni']];
  const rest = ['CMPE239', 'CMPE277', 'CMPE297', 'CMPE295A', 'CMPE295B', 'MSSE', 'Books', 'Softwares', 'Job Related', '*MyProjectsAndLear...', 'Interview Questions'];
  r.querySelector('nav').innerHTML = top.map(([i, t]) => `<side-item icon="${i}">${t}</side-item>`).join('') +
    rest.map(t => t[0] === '*' ? `<side-item icon="sfolderOn" current>${t.slice(1)}</side-item>` : `<side-item icon="sfolder">${t}</side-item>`).join('');
});

define('file-item', `
<style>
  :host { display: grid; grid-template-columns: 191px 1fr; align-items: center; height: 18px; font-size: 12px; line-height: 18px; margin-left: 1px; }
  .row { display: flex; align-items: center; gap: 6px; height: 18px; padding-left: 4px; border-radius: 9px; white-space: nowrap; }
  .more { margin-left: 2px; }
  :host([state=path]) .row { background: #d4d4d4; }
  :host([state=on]) .row { background: #3575d3; color: #fff; }
</style>
<div class="row"><span><slot></slot></span></div>`,
(r, el) => {
  const kind = el.getAttribute('kind'), i = document.createElement('ui-icon'), row = r.querySelector('.row');
  i.setAttribute('name', kind);
  row.prepend(i);
  if (kind === 'folder') row.insertAdjacentHTML('afterend', '<ui-icon class="more" name="arrow"></ui-icon>');
});

/* "/" marks a folder, ">" the open folder on the path, "+" a selected file */
const SETS = [
  ['/Chrome Ext...s Angular JS', '/CPPPrograms', '/CPrograms', '/DOSProject', '/hadoop', '/heroku-sample', '/JavaPrograms', '/JavaScriptPrograms', '>PythonPrograms', '/RLearning', '/RubynRails', '/Sencha Extjs Projects', '/Website'],
  ['/Android', '>Apks', 'blogCode', '/CreateCSVfromTXT', 'fibonacci.py', '/FileUploadDownload', 'get-pip.py', 'hayStringProgram.py', 'helloWorld.py', 'helloworldd.py', 'helloWorlds.py', 'httpRequestResponse.py', '/JsonAjaxExample', 'layout.html', '/Localization', '/MongoDB', 'PlanCounty.csv', '/Project_Data_Singly', '/readCSVFile', '/renderEncodedHTML', '/RESTfulFlask', 'reverseList.py', 'Survey_of_Patients.csv', 'test.txt', 'testMongoDB.py', 'testMongoD...nProgram.py'],
  ['F8_1.0_8158200.apk', '+Facebook_3...743010.apk', 'Groups_21....331487.apk', 'Messenger_...921491.apk', '+Pages Mana...214028.apk', 'Selfied_null_8374203.apk', 'Shout!_1.0_8356585.apk', '+Slingshot_2.1_7537984.apk', 'Sound Clips...596426.apk', '+Stickered_1.1_6900625.apk', 'Strobe_null_8346751.apk', '/TerminalCommands_Extras', 'Work_28.0....7622659.apk']
];
define('file-column', `
<style>:host { display: block; box-sizing: border-box; border-right: 1px solid #d9d9d9; padding-top: 1px; }</style>
<div></div>`,
(r, el) => r.querySelector('div').innerHTML = SETS[el.dataset.set].map(s => {
  const m = /^[\/>+]/.test(s) ? s[0] : '', t = m ? s.slice(1) : s;
  const kind = m === '/' || m === '>' ? 'folder' : t.endsWith('.html') ? 'html' : t.endsWith('.txt') ? 'text' : 'file';
  const state = m === '>' ? ' state="path"' : m === '+' ? ' state="on"' : '';
  return `<file-item kind="${kind}"${state}>${t}</file-item>`;
}).join(''));

/* ---------- dock ---------- */
define('app-dock', `
<style>
  :host { display: flex; justify-content: center; align-items: end; position: relative; padding-left: 4px; z-index: 2; }
  nav { display: flex; height: 29px; padding: 0 10px; position: relative; }
  .shelf { position: absolute; left: 0; right: 0; bottom: 0; height: 21px; background: linear-gradient(#8d96ad, #cfd4df 17px, #f2f3f6 18px, #a9adb5 19px); clip-path: polygon(9px 0, calc(100% - 9px) 0, 100% 100%, 0 100%); }
  button { all: unset; width: 24px; height: 29px; display: grid; justify-items: center; align-content: space-between; position: relative; }
  button.sep { width: 12px; }
  i { width: 6px; height: 3px; border-radius: 1px; background: #e5fbff; box-shadow: 0 0 3px #9be4ff; }
  .peek { position: absolute; right: 25px; bottom: 0; width: 278px; height: 3px; background: #f4f4f2; clip-path: polygon(0 0, 100% 0, calc(100% - 3px) 100%, 3px 100%); }
</style>
<nav aria-label="Dock"><div class="shelf"></div></nav><div class="peek"></div>`,
r => {
  const apps = 'finder* qt facetime launch safari atom grid cal* remind sticky* itunes ibooks appstore prefs word* ppt outlook excel vm photo chrome* kindle xcode pages skype* sublime* r blender td android terminal* textedit* mail* sep dockdoc thumbw thumbw thumbc thumbc trash'.split(' ');
  r.querySelector('nav').insertAdjacentHTML('beforeend', apps.map(a => {
    const n = a.replace('*', '');
    return `<button aria-label="${n}"${n === 'sep' ? ' class="sep"' : ''}><ui-icon name="${n}"></ui-icon>${a !== n ? '<i></i>' : ''}</button>`;
  }).join(''));
});
</script>
</body>
</html>
